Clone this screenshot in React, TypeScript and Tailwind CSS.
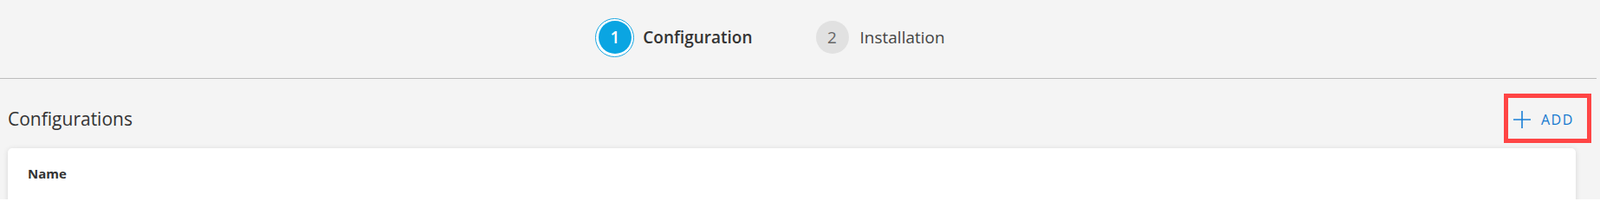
import React from 'react';

function StepCircle({ num, active }: { num: number; active: boolean }) {
  if (active) {
    return (
      <div className="w-[45px] h-[45px] rounded-full border-[1.5px] border-[#1aa7e3] p-[2.5px] bg-white">
        <div className="w-full h-full rounded-full bg-[#0aa5e2] flex items-center justify-center text-white text-[19px] font-semibold">
          {num}
        </div>
      </div>
    );
  }
  return (
    <div className="w-[38px] h-[38px] rounded-full bg-[#e1e1e1] flex items-center justify-center text-[#666] text-[19px]">
      {num}
    </div>
  );
}

function Stepper() {
  return (
    <div className="h-[91px] mr-[4px] border-b border-[#bdbdbd] flex items-center justify-center pr-[65px] pb-[4px]">
      <div className="flex items-center">
        <StepCircle num={1} active />
        <span className="ml-[10px] text-[19px] font-semibold text-[#333]">Configuration</span>
        <div className="ml-[73px]">
          <StepCircle num={2} active={false} />
        </div>
        <span className="ml-[13px] text-[19px] text-[#444]">Installation</span>
      </div>
    </div>
  );
}

function PlusIcon() {
  return (
    <svg width="20" height="20" viewBox="0 0 20 20" fill="none">
      <path d="M10 0v20M0 10h20" stroke="#1a7fd6" strokeWidth="1.6" />
    </svg>
  );
}

export default function App() {
  return (
    <div className="w-full h-[230px] overflow-hidden bg-[#f4f4f4] font-['Open_Sans',sans-serif]">
      <Stepper />
      <div className="flex items-center justify-between pl-[9px] pr-[10px] mt-[17px]">
        <h2 className="text-[21px] text-[#333] pt-[3px]">Configurations</h2>
        <button className="w-[101px] h-[57px] border-[5px] border-[#ff4545] flex items-center pl-[6px] gap-[12px] pt-[2px]">
          <PlusIcon />
          <span className="text-[16px] text-[#1479cf] tracking-[1.5px]">ADD</span>
        </button>
      </div>
      <div className="ml-[9px] mr-[28px] mt-[6px] bg-white rounded-[5px] shadow-[0_1px_6px_rgba(0,0,0,0.12)] h-[120px] px-[23px] pt-[17px]">
        <span className="text-[15px] font-bold text-[#333]">Name</span>
      </div>
    </div>
  );
}
